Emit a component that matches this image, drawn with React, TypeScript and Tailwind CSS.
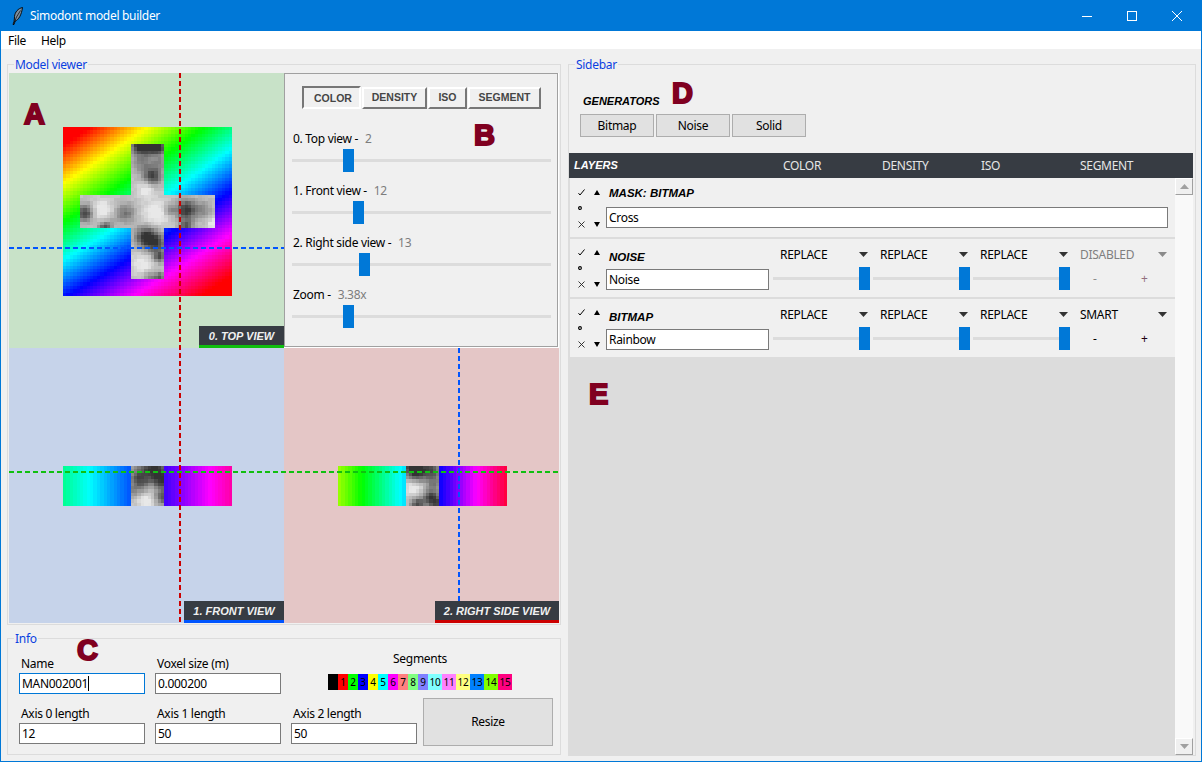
import React from "react";

type Blob = [number, number, number, number];

const crossBlobs: Blob[] = [
  [22, 5, 2.4, -0.55], [25, 5, 2.4, -0.6], [28, 5.5, 2.2, -0.5], [26, 14, 2.6, -0.5], [23, 10, 3, -0.25], [28, 10, 2, -0.2],
  [24, 18, 2.2, 0.2], [27, 25, 4, 0.2], [24, 32, 3, -0.55], [27, 34, 3, -0.45],
  [23, 40, 3, 0.18], [28, 38, 1.6, -0.4], [28, 44, 1.6, -0.4], [25, 44, 1.6, -0.25],
  [6, 25, 2.4, -0.5], [11, 24, 3, 0.2], [18, 25, 2.8, -0.3], [14, 27, 2, -0.05], [12, 29.5, 2, -0.45],
  [31, 24, 1.6, -0.25], [36, 24, 3, -0.55], [36, 29, 2, -0.4], [41, 24, 2.4, -0.2], [44, 28, 1.4, 0.25],
];
const frontBlobs: Blob[] = [
  [6, 0, 4, -0.55], [9, 4, 3, -0.45], [1.5, 3, 2.5, -0.3], [4, 10, 2.2, 0.2], [5.5, 6, 1.6, 0.12],
  [9, 9, 2, -0.4], [0, 7, 2, -0.2], [3, 5, 2.5, -0.2],
];
const sideBlobs: Blob[] = [
  [2, 0, 3, -0.7], [7, 1, 3, -0.45], [3, 3, 2, -0.15], [8, 5, 2, -0.2], [2, 6, 2.5, 0.2],
  [7, 9, 2.4, -0.5], [3, 11, 2, -0.45], [9, 11, 2, -0.35],
];

function grayAt(x: number, y: number, blobs: Blob[]) {
  let v = 0.76;
  for (const [bx, by, r, a] of blobs) {
    const d = ((x - bx) ** 2 + (y - by) ** 2) / (r * r);
    v += a * Math.exp(-d);
  }
  v += (((x * 37 + y * 91) % 17) / 17 - 0.5) * 0.05;
  const g = Math.round(Math.min(0.91, Math.max(0.2, v)) * 255);
  return `rgb(${g},${g},${g})`;
}

function topHue(u: number, v: number) {
  const h = -25 * (1 - u) * (1 - v) + 150 * u * (1 - v) + 235 * (1 - u) * v + 385 * u * v;
  return Math.min(360, Math.max(0, h));
}

function hsl(h: number) {
  return `hsl(${h},100%,50%)`;
}

function inCross(x: number, y: number) {
  return (x >= 20 && x < 30 && y >= 5 && y < 45) || (y >= 20 && y < 30 && x >= 5 && x < 45);
}

function PixelImage({ cols, rows, colorAt }: { cols: number; rows: number; colorAt: (x: number, y: number) => string }) {
  const cells = [];
  for (let y = 0; y < rows; y++) {
    for (let x = 0; x < cols; x++) {
      cells.push(<rect key={`${x}-${y}`} x={x} y={y} width={1.02} height={1.02} fill={colorAt(x, y)} />);
    }
  }
  return (
    <svg width={169} height={rows === 50 ? 169 : 40} viewBox={`0 0 ${cols} ${rows}`} preserveAspectRatio="none" shapeRendering="crispEdges" className="block">
      {cells}
    </svg>
  );
}

const topColor = (x: number, y: number) =>
  inCross(x, y) ? grayAt(x, y, crossBlobs) : hsl(topHue(x / 49, y / 49));
const frontColor = (x: number, y: number) =>
  x >= 20 && x < 30 ? grayAt(x - 20, y, frontBlobs) : hsl(155 + (165 * x) / 49);
const sideColor = (x: number, y: number) =>
  x >= 20 && x < 30 ? grayAt(x - 20, y, sideBlobs) : hsl(85 + (260 * x) / 49);

function ViewLabel({ text, width, bar }: { text: string; width: string; bar: string }) {
  return (
    <div className={`absolute right-0 bottom-0 h-[22px] pt-px bg-[#373c43] border-b-[3px] flex items-center justify-center font-['Liberation_Sans',sans-serif] tracking-normal font-bold italic text-[11px] text-[#f0f0f0] ${width} ${bar}`}>
      {text}
    </div>
  );
}

function Slider({ width, left }: { width: string; left: number }) {
  return (
    <div className={`relative h-[23px] flex items-center ${width}`}>
      <div className="w-full h-[3px] bg-[#dcdcdc]" />
      <div className="absolute top-0 h-[23px] w-[11px] bg-[#0078d7]" style={{ left }} />
    </div>
  );
}

function Frame({ title, className, children }: { title: string; className: string; children: React.ReactNode }) {
  return (
    <div className={`relative border border-[#dcdcdc] ${className}`}>
      <span className="absolute -top-[9px] left-[6px] bg-[#f0f0f0] px-px h-[16px] leading-[17px] text-[#0a3fe0]">{title}</span>
      {children}
    </div>
  );
}

function Field({ label, value, focused }: { label: string; value: string; focused?: boolean }) {
  return (
    <div className="flex flex-col w-[126px]">
      <div className="h-[16px] leading-[18px] pl-[2px] mb-[2px] text-black">{label}</div>
      <div className={`h-[21px] bg-white border px-[2px] flex items-center ${focused ? "border-[#0078d7]" : "border-[#7a7a7a]"}`}>
        <span className="text-black">{value}</span>
        {focused && <span className="w-px h-[15px] bg-black" />}
      </div>
    </div>
  );
}

function Tab({ text, width, active }: { text: string; width: string; active?: boolean }) {
  return (
    <div className={`flex items-center justify-center border-2 font-['Liberation_Sans',sans-serif] tracking-normal font-bold text-[10.5px] text-[#454545] ${width} ${active ? "h-[23px] -mt-px pt-[2px] pl-[3px] bg-[#f0f0f0] border-t-[#777777] border-l-[#777777] border-r-white border-b-white" : "h-[22px] bg-[#f0f0f0] border-t-white border-l-white border-r-[#777777] border-b-[#777777]"}`}>
      {text}
    </div>
  );
}

function ViewSlider({ label, value, left, className }: { label: string; value: string; left: number; className: string }) {
  return (
    <div className={className}>
      <div className="h-[16px] leading-[18px] pl-px mb-[3px] text-black">
        {label} - <span className="ml-[4px] text-[#7d7d7d]">{value}</span>
      </div>
      <Slider width="w-[259px]" left={left} />
    </div>
  );
}

function Mark({ text, className }: { text: string; className: string }) {
  return (
    <span className={`absolute font-['Liberation_Sans',sans-serif] tracking-normal font-bold text-[29px] leading-none text-[#800020] [-webkit-text-stroke:2px_#800020] ${className}`}>
      {text}
    </span>
  );
}

function Caret({ color = "#333333" }: { color?: string }) {
  return (
    <svg width="9" height="5" viewBox="0 0 9 5" className="block">
      <path d="M0 0h9L4.500 5z" fill={color} />
    </svg>
  );
}

function RowControls({ className }: { className: string }) {
  return (
    <div className={`grid grid-cols-[15px_15px] self-start content-start w-[30px] shrink-0 ${className}`}>
      <div className="h-[16px] flex items-center justify-center">
        <svg width="7" height="7" viewBox="0 0 7 7"><path d="M0.500 4.200 2 6 6.500 0.500" fill="none" stroke="#000" strokeWidth="1" /></svg>
      </div>
      <div className="h-[16px] flex items-center justify-center">
        <svg width="6" height="5" viewBox="0 0 6 5"><path d="M3 0l3 5H0z" fill="#000" /></svg>
      </div>
      <div className="h-[16px] flex items-center justify-start pl-[4px]">
        <svg width="4" height="4" viewBox="0 0 4 4"><circle cx="2" cy="2" r="1.400" fill="none" stroke="#000" strokeWidth="1.100" /></svg>
      </div>
      <div className="h-[16px]" />
      <div className="h-[16px] flex items-center justify-center">
        <svg width="7" height="7" viewBox="0 0 7 7"><path d="M0.500 0.500l6 6M6.500 0.500l-6 6" fill="none" stroke="#222" strokeWidth="0.900" /></svg>
      </div>
      <div className="h-[16px] flex items-center justify-center">
        <svg width="6" height="5" viewBox="0 0 6 5"><path d="M0 0h6L3 5z" fill="#000" /></svg>
      </div>
    </div>
  );
}

function BlendColumn({ mode, width = "w-[100px]", left = 86 }: { mode: string; width?: string; left?: number }) {
  return (
    <div className={`shrink-0 pt-[7px] ${width}`}>
      <div className="h-[16px] flex items-center justify-between pl-[7px] pr-[5px] text-black">
        <span className="translate-y-px">{mode}</span>
        <Caret />
      </div>
      <div className="mt-[5px]">
        <Slider width="w-[96px]" left={left} />
      </div>
    </div>
  );
}

function SegmentColumn({ mode, disabled }: { mode: string; disabled?: boolean }) {
  return (
    <div className="w-[102px] shrink-0 pt-[7px]">
      <div className={`h-[16px] flex items-center justify-between pl-[7px] pr-[8px] ${disabled ? "text-[#7f7f7f]" : "text-black"}`}>
        <span className="translate-y-px">{mode}</span>
        <Caret color={disabled ? "#8a8a8a" : "#333333"} />
      </div>
      <div className={`mt-[5px] h-[23px] flex items-center pl-[20px] ${disabled ? "text-[#8c8c8c]" : "text-black"}`}>
        <span className="w-[48px]">-</span>
        <span className={disabled ? "text-[#93707f]" : "text-[#200010]"}>+</span>
      </div>
    </div>
  );
}

function LayerRow({ title, value, mode, disabled }: { title: string; value: string; mode: string; disabled?: boolean }) {
  return (
    <div className="h-[58px] bg-[#f0f0f0] flex pl-[4px]">
      <RowControls className="pt-[5px]" />
      <div className="w-[167px] shrink-0 ml-[2px] pt-[10px]">
        <div className="h-[16px] leading-[16px] pl-[3px] font-['Liberation_Sans',sans-serif] tracking-normal font-bold italic text-[11.5px] text-black">{title}</div>
        <div className="w-[163px] h-[21px] mt-[4px] bg-white border border-[#7a7a7a] px-[2px] flex items-center text-black">{value}</div>
      </div>
      <BlendColumn mode="REPLACE" />
      <BlendColumn mode="REPLACE" />
      <BlendColumn mode="REPLACE" />
      <SegmentColumn mode={mode} disabled={disabled} />
    </div>
  );
}

const segments = [
  ["", "bg-black", "w-[10px]"], ["1", "bg-[#ff0000]", "w-[10px]"], ["2", "bg-[#00ff00]", "w-[10px]"], ["3", "bg-[#0000ff]", "w-[10px]"],
  ["4", "bg-[#ffff00]", "w-[10px]"], ["5", "bg-[#00ffff]", "w-[10px]"], ["6", "bg-[#ff00ff]", "w-[10px]"], ["7", "bg-[#ff8080]", "w-[10px]"],
  ["8", "bg-[#80ff80]", "w-[10px]"], ["9", "bg-[#8080ff]", "w-[10px]"], ["10", "bg-[#80ffff]", "w-[14px]"], ["11", "bg-[#ff80ff]", "w-[14px]"],
  ["12", "bg-[#ffff80]", "w-[14px]"], ["13", "bg-[#0080ff]", "w-[14px]"], ["14", "bg-[#80ff00]", "w-[14px]"], ["15", "bg-[#ff0080]", "w-[14px]"],
];

function GenButton({ text }: { text: string }) {
  return (
    <div className="w-[74px] h-[23px] bg-[#e1e1e1] border border-[#adadad] flex items-center justify-center text-black">{text}</div>
  );
}

export default function App() {
  return (
    <div className="relative w-[1202px] h-[762px] overflow-hidden bg-[#f0f0f0] border-x border-b border-[#0078d7] font-['Noto_Sans',sans-serif] tracking-[-0.3px] text-[12px] flex flex-col">
      {/* Title bar */}
      <div className="h-[31px] shrink-0 bg-[#0078d7] flex items-center pr-[2px] text-white">
        <svg width="12" height="18" viewBox="0 0 12 18" className="ml-[11px] mr-[6px]">
          <path d="M10.500 0.500C6 1.500 3 5 2.500 9.500 2.300 11.500 2.500 12.500 2 14.500L1 17.500 2 17.500 3.200 14C6.500 13 9.500 8 10.500 0.500Z" fill="#7f8f9f" stroke="#000" strokeWidth="0.900" />
          <path d="M8.500 3.500 4.500 10 2.500 15" fill="none" stroke="#000" strokeWidth="0.700" />
        </svg>
        <span className="flex-1">Simodont model builder</span>
        <div className="w-[45px] h-[31px] flex items-center justify-center">
          <svg width="10" height="10" viewBox="0 0 10 10"><path d="M0 5.500h10" stroke="#fff" strokeWidth="1" /></svg>
        </div>
        <div className="w-[45px] h-[31px] flex items-center justify-center">
          <svg width="10" height="10" viewBox="0 0 10 10"><rect x="0.500" y="0.500" width="9" height="9" fill="none" stroke="#fff" strokeWidth="1" /></svg>
        </div>
        <div className="w-[45px] h-[31px] flex items-center justify-center">
          <svg width="10" height="10" viewBox="0 0 10 10"><path d="M0 0l10 10M10 0L0 10" stroke="#fff" strokeWidth="1" /></svg>
        </div>
      </div>
      {/* Menu */}
      <div className="h-[18px] shrink-0 bg-white flex items-center pl-[7px] pt-[2px] gap-[15px] text-black">
        <span>File</span>
        <span>Help</span>
      </div>

      <div className="flex pt-[15px] pl-[6px] gap-[7px]">
        {/* Left column */}
        <div className="w-[554px] flex flex-col gap-[13px]">
          <Frame title="Model viewer" className="h-[561px] pt-[8px] px-px">
            <div className="relative grid grid-cols-[275px_275px] grid-rows-[275px_275px] w-[550px] h-[550px]">
              <div className="bg-[#c8e2c8] pl-[54px] pt-[54px]">
                <PixelImage cols={50} rows={50} colorAt={topColor} />
              </div>
              <div className="bg-white">
                <div className="w-[274px] h-[274px] bg-[#f0f0f0] border border-[#a0a0a0] pl-[7px] pt-[13px]">
                  <div className="flex gap-px pl-[10px]">
                    <Tab text="COLOR" width="w-[59px]" active />
                    <Tab text="DENSITY" width="w-[65px]" />
                    <Tab text="ISO" width="w-[39px]" />
                    <Tab text="SEGMENT" width="w-[73px]" />
                  </div>
                  <ViewSlider label="0. Top view" value="2" left={51} className="mt-[21px]" />
                  <ViewSlider label="1. Front view" value="12" left={61} className="mt-[10px]" />
                  <ViewSlider label="2. Right side view" value="13" left={67} className="mt-[10px]" />
                  <ViewSlider label="Zoom" value="3.38x" left={51} className="mt-[10px]" />
                </div>
              </div>
              <div className="bg-[#c6d3ea] pl-[54px] pt-[118px]">
                <PixelImage cols={50} rows={12} colorAt={frontColor} />
              </div>
              <div className="bg-[#e4c6c6] pl-[54px] pt-[118px]">
                <PixelImage cols={50} rows={12} colorAt={sideColor} />
              </div>

              {/* Crosshairs over the slices */}
              <svg width="550" height="550" viewBox="0 0 550 550" className="absolute left-0 top-0 pointer-events-none">
                <line x1="171" y1="0" x2="171" y2="550" stroke="#cc0000" strokeWidth="2" strokeDasharray="5 3" />
                <line x1="0" y1="175" x2="275" y2="175" stroke="#0055ff" strokeWidth="2" strokeDasharray="5 3" />
                <line x1="0" y1="399" x2="550" y2="399" stroke="#10c010" strokeWidth="2" strokeDasharray="5 3" />
                <line x1="450" y1="275" x2="450" y2="550" stroke="#0055ff" strokeWidth="2" strokeDasharray="5 3" />
              </svg>

              <div className="absolute left-0 top-0 w-[275px] h-[275px]">
                <ViewLabel text="0. TOP VIEW" width="w-[85px]" bar="border-[#10c010]" />
              </div>
              <div className="absolute left-0 top-[275px] w-[275px] h-[275px]">
                <ViewLabel text="1. FRONT VIEW" width="w-[100px]" bar="border-[#0055ff]" />
              </div>
              <div className="absolute left-[275px] top-[275px] w-[275px] h-[275px]">
                <ViewLabel text="2. RIGHT SIDE VIEW" width="w-[124px]" bar="border-[#cc0000]" />
              </div>
            </div>
          </Frame>

          <Frame title="Info" className="h-[117px] pl-[11px] pt-[16px]">
            <div className="flex items-start gap-[10px] h-[50px]">
              <Field label="Name" value="MAN002001" focused />
              <Field label="Voxel size (m)" value="0.000200" />
              <div className="ml-[37px] -mt-[5px] w-[184px] flex flex-col items-center">
                <div className="h-[16px] leading-[18px] text-black">Segments</div>
                <div className="flex mt-[8px]">
                  {segments.map(([n, bg, w]) => (
                    <div key={n + bg} className={`h-[16px] flex items-center justify-center text-[10px] text-black ${bg} ${w}`}>{n}</div>
                  ))}
                </div>
              </div>
            </div>
            <div className="flex items-start gap-[10px]">
              <Field label="Axis 0 length" value="12" />
              <Field label="Axis 1 length" value="50" />
              <Field label="Axis 2 length" value="50" />
              <div className="-ml-[4px] -mt-[7px] w-[130px] h-[48px] bg-[#e1e1e1] border border-[#adadad] flex items-center justify-center text-black">Resize</div>
            </div>
          </Frame>
        </div>

        {/* Sidebar */}
        <Frame title="Sidebar" className="w-[628px] h-[692px] flex flex-col">
          <div className="h-[16px] mt-[28px] ml-[14px] leading-[16px] font-['Liberation_Sans',sans-serif] tracking-normal font-bold italic text-[11px] text-black">GENERATORS</div>
          <div className="flex gap-[2px] mt-[5px] ml-[11px]">
            <GenButton text="Bitmap" />
            <GenButton text="Noise" />
            <GenButton text="Solid" />
          </div>
          <div className="w-[624px] h-[25px] mt-[16px] shrink-0 bg-[#373c43] flex items-center text-[#e6e6e6]">
            <span className="w-[214px] pl-[5px] font-['Liberation_Sans',sans-serif] tracking-normal font-bold italic text-[11px] text-white">LAYERS</span>
            <span className="w-[99px]">COLOR</span>
            <span className="w-[99px]">DENSITY</span>
            <span className="w-[99px]">ISO</span>
            <span>SEGMENT</span>
          </div>
          <div className="flex w-[624px] flex-1">
            <div className="w-[606px] bg-[#dcdcdc] pl-px flex flex-col gap-[2px]">
              <div className="h-[59px] bg-[#f0f0f0] flex pl-[4px]">
                <RowControls className="pt-[6px]" />
                <div className="ml-[2px] pt-[7px]">
                  <div className="h-[16px] leading-[16px] pl-[3px] font-['Liberation_Sans',sans-serif] tracking-normal font-bold italic text-[11.5px] text-black">MASK: BITMAP</div>
                  <div className="w-[562px] h-[21px] mt-[6px] bg-white border border-[#7a7a7a] px-[2px] flex items-center text-black">Cross</div>
                </div>
              </div>
              <LayerRow title="NOISE" value="Noise" mode="DISABLED" disabled />
              <LayerRow title="BITMAP" value="Rainbow" mode="SMART" />
            </div>
            {/* Scrollbar */}
            <div className="w-[18px] bg-[#f9f9f9] flex flex-col justify-between">
              <div className="h-[17px] bg-[#f0f0f0] border-t border-l border-t-white border-l-white border-r border-b border-r-[#a0a0a0] border-b-[#a0a0a0] flex items-center justify-center">
                <svg width="9" height="5" viewBox="0 0 9 5"><path d="M4.500 0L9 5H0z" fill="#a0a0a0" /></svg>
              </div>
              <div className="h-[17px] bg-[#f0f0f0] border-t border-l border-t-white border-l-white border-r border-b border-r-[#a0a0a0] border-b-[#a0a0a0] flex items-center justify-center">
                <svg width="9" height="5" viewBox="0 0 9 5"><path d="M0 0h9L4.500 5z" fill="#a0a0a0" /></svg>
              </div>
            </div>
          </div>
        </Frame>
      </div>

      <Mark text="A" className="left-[23px] top-[100px]" />
      <Mark text="B" className="left-[473px] top-[121px]" />
      <Mark text="C" className="left-[76px] top-[636px]" />
      <Mark text="D" className="left-[671px] top-[79px]" />
      <Mark text="E" className="left-[588px] top-[380px]" />
    </div>
  );
}
